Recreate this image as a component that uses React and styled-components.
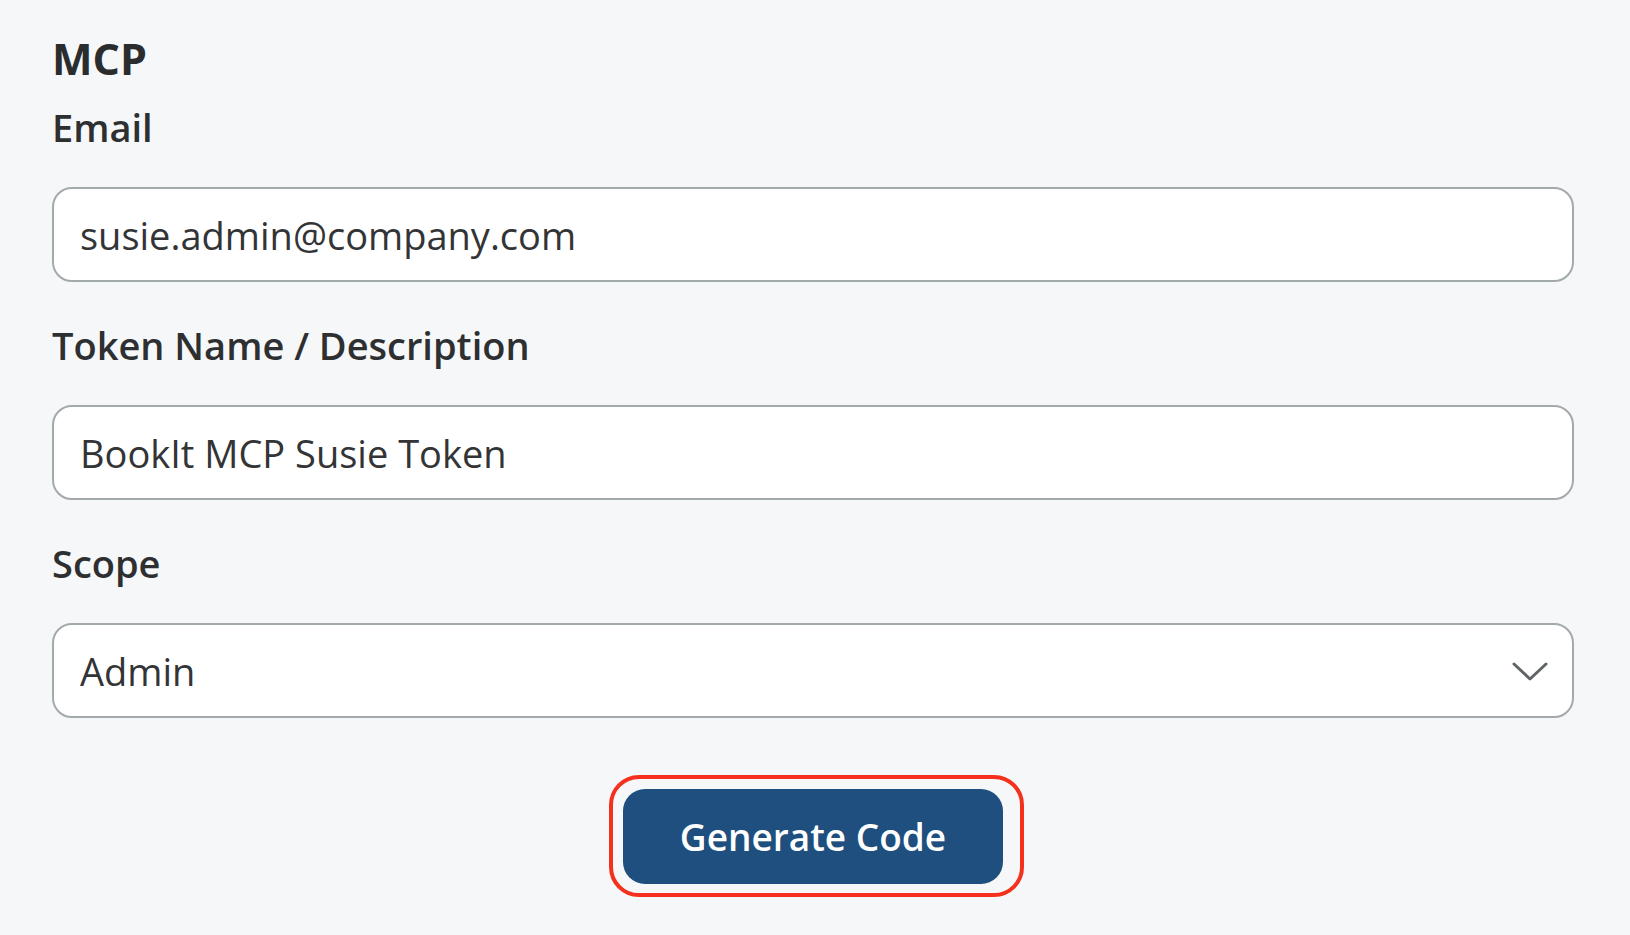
import React from "react";
import styled, { createGlobalStyle } from "styled-components";

const GlobalStyle = createGlobalStyle`
  html, body {
    margin: 0;
    padding: 0;
    background: #f6f7f9;
  }
  body {
    font-family: "Open Sans", "Noto Sans", sans-serif;
    color: #2e2f31;
  }
`;

const Page = styled.div`
  min-height: 935px;
  box-sizing: border-box;
  padding: 34px 56px 0 52px;
  background: #f6f7f9;
`;

const Title = styled.h2`
  margin: 0 0 18px 0;
  font-size: 43px;
  line-height: 50px;
  font-weight: 700;
  color: #2b2c2e;
`;

const Field = styled.div`
  display: flex;
  flex-direction: column;
  & + & {
    margin-top: 38px;
  }
`;

const Label = styled.label`
  margin: 0 0 35px 0;
  font-size: 38px;
  line-height: 50px;
  font-weight: 600;
  color: #2e2f31;
`;

const TextInput = styled.input`
  box-sizing: border-box;
  width: 100%;
  height: 95px;
  padding: 0 26px;
  border: 2px solid #a2aaab;
  border-radius: 20px;
  background: #fff;
  font-family: inherit;
  font-size: 38px;
  color: #333436;
  outline: none;
`;

const SelectBox = styled.div`
  box-sizing: border-box;
  display: flex;
  align-items: center;
  height: 95px;
  padding: 0 24px 0 26px;
  border: 2px solid #a2aaab;
  border-radius: 20px;
  background: #fff;
`;

const Select = styled.select`
  flex: 1;
  appearance: none;
  border: none;
  background: transparent;
  padding: 0;
  font-family: inherit;
  font-size: 38px;
  color: #333436;
  outline: none;
`;

const ButtonRow = styled.div`
  display: flex;
  justify-content: center;
  margin-top: 57px;
`;

const HighlightRing = styled.div`
  display: inline-flex;
  margin-left: 7px;
  padding: 10px 17px 9px 10px;
  border: 4px solid #f5301c;
  border-radius: 30px;
`;

const PrimaryButton = styled.button`
  width: 380px;
  height: 95px;
  border: none;
  border-radius: 22px;
  background: #1e4f7e;
  color: #fff;
  font-family: inherit;
  font-size: 37px;
  font-weight: 600;
  cursor: pointer;
`;

const Chevron = () => (
  <svg width="36" height="22" viewBox="0 0 36 22" fill="none">
    <polyline
      points="2,4 18,19 34,4"
      stroke="#5f6466"
      strokeWidth="3"
      strokeLinecap="round"
      strokeLinejoin="round"
    />
  </svg>
);

export default function App() {
  return (
    <Page>
      <GlobalStyle />
      <Title>MCP</Title>
      <Field>
        <Label>Email</Label>
        <TextInput defaultValue="susie.admin@company.com" />
      </Field>
      <Field>
        <Label>Token Name / Description</Label>
        <TextInput defaultValue="BookIt MCP Susie Token" />
      </Field>
      <Field>
        <Label>Scope</Label>
        <SelectBox>
          <Select defaultValue="admin">
            <option value="admin">Admin</option>
            <option value="read">Read only</option>
          </Select>
          <Chevron />
        </SelectBox>
      </Field>
      <ButtonRow>
        <HighlightRing>
          <PrimaryButton>Generate Code</PrimaryButton>
        </HighlightRing>
      </ButtonRow>
    </Page>
  );
}
